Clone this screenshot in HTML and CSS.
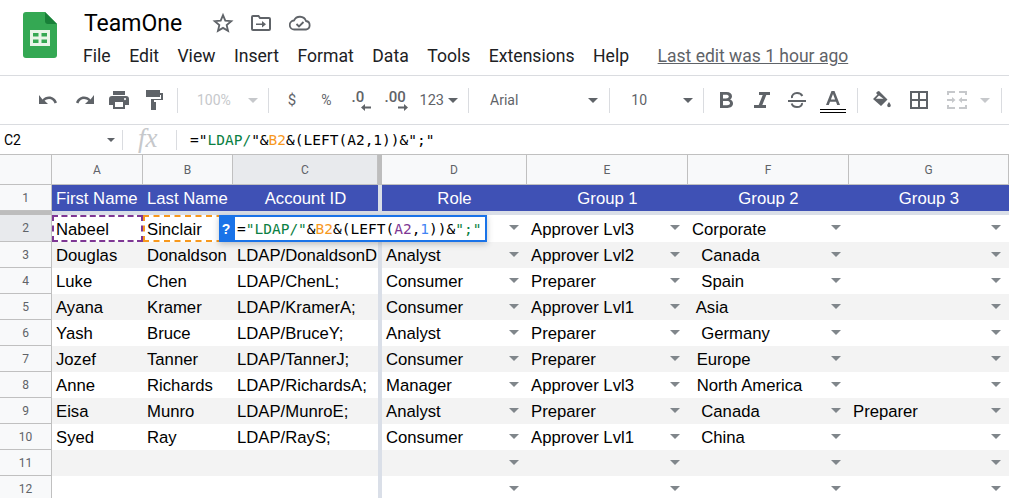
FILE: index.html
```html
<!DOCTYPE html>
<html lang="en">
<head>
  <meta charset="UTF-8">
  <meta name="viewport" content="width=device-width, initial-scale=1.0">
  <title>TeamOne</title>
  <link rel="stylesheet" href="styles.css">
</head>
<body>
  <header class="titlebar">
    <svg class="logo" width="34" height="46" viewBox="0 0 34 46">
      <path d="M3 0H22L34 12V43a3 3 0 0 1-3 3H3a3 3 0 0 1-3-3V3a3 3 0 0 1 3-3z" fill="#34a853"/>
      <path d="M22 0L34 12H25a3 3 0 0 1-3-3z" fill="#188038"/>
      <path d="M7 18H27V34H7zM10 21V24.500H15.500V21zM18.500 21V24.500H24V21zM10 27.500V31H15.500V27.500zM18.500 27.500V31H24V27.500z" fill="#e8f5e9" fill-rule="evenodd"/>
    </svg>
    <div class="titlebar-main">
      <div class="doc-row">
        <span class="doc-name">TeamOne</span>
        <svg class="doc-star" width="22" height="22" viewBox="0 0 24 24"><path d="M12 3.500l2.500 6 6.500.5-5 4.300 1.500 6.300L12 17.300 6.500 20.600 8 14.300 3 10l6.500-.5z" fill="none" stroke="#5f6368" stroke-width="2"/></svg>
        <svg class="doc-move" width="20" height="18" viewBox="0 0 20 18"><path d="M1 3V15a1 1 0 0 0 1 1H18a1 1 0 0 0 1-1V5a1 1 0 0 0-1-1H9L7.500 2H2A1 1 0 0 0 1 3z" fill="none" stroke="#5f6368" stroke-width="2"/><path d="M5 9.500h6V7l4 3.200-4 3.200v-2.500H5z" fill="#5f6368"/></svg>
        <svg class="doc-cloud" width="22" height="16" viewBox="0 0 22 16"><path d="M5.500 14.500a4.500 4.500 0 0 1-.5-9A6.500 6.500 0 0 1 17 6a4.300 4.300 0 0 1 0 8.500z" fill="none" stroke="#5f6368" stroke-width="1.800"/><path d="M7.500 9l2.500 2.500 4.500-4.500" fill="none" stroke="#5f6368" stroke-width="1.800"/></svg>
      </div>
      <nav class="menu-row">
        <span class="menu-item">File</span>
        <span class="menu-item">Edit</span>
        <span class="menu-item">View</span>
        <span class="menu-item">Insert</span>
        <span class="menu-item">Format</span>
        <span class="menu-item">Data</span>
        <span class="menu-item">Tools</span>
        <span class="menu-item">Extensions</span>
        <span class="menu-item">Help</span>
        <span class="last-edit">Last edit was 1 hour ago</span>
      </nav>
    </div>
  </header>

  <div class="toolbar">
    <svg class="tool tool-undo" width="20" height="12" viewBox="0 0 20 12"><path d="M3.500 5.500C5 3.500 7.500 2.500 10 2.500c3.700 0 6.800 2.400 8 6l-2.400 1C14.800 6.800 12.600 5 10 5c-1.700 0-3.200.7-4.400 1.800L9 10H0V1z" fill="#5f6368"/></svg>
    <svg class="tool tool-redo" width="20" height="12" viewBox="0 0 20 12"><path d="M16.500 5.500C15 3.500 12.500 2.500 10 2.500c-3.700 0-6.800 2.400-8 6l2.400 1C5.200 6.800 7.400 5 10 5c1.700 0 3.200.7 4.400 1.800L11 10h9V1z" fill="#5f6368"/></svg>
    <svg class="tool tool-print" width="20" height="18" viewBox="0 0 20 18"><path d="M4 0H16V4H4zM3 5H17a3 3 0 0 1 3 3V14H16V18H4V14H0V8a3 3 0 0 1 3-3zM6 11V16H14V11zM16 7a1 1 0 1 0 .01 0z" fill="#5f6368" fill-rule="evenodd"/></svg>
    <svg class="tool tool-paint" width="17" height="20" viewBox="0 0 17 20"><path d="M0 0H14V3H17V10H8V12H10V20H5V9H15V5H14V7H0z" fill="#5f6368"/></svg>
    <span class="tool-sep sep-a"></span>
    <span class="tool-zoom">100%</span>
    <span class="caret caret-off caret-zoom"></span>
    <span class="tool-sep sep-b"></span>
    <span class="tool-text tool-dollar">$</span>
    <span class="tool-text tool-percent">%</span>
    <span class="tool-dec tool-dec-less">.0<svg width="10" height="7" viewBox="0 0 10 7"><path d="M0 3.500L4 0V2.500H10V4.500H4V7z" fill="#5f6368"/></svg></span>
    <span class="tool-dec tool-dec-more">.00<svg width="10" height="7" viewBox="0 0 10 7"><path d="M10 3.500L6 0V2.500H0V4.500H6V7z" fill="#5f6368"/></svg></span>
    <span class="tool-text tool-numfmt">123</span>
    <span class="caret"></span>
    <span class="tool-sep sep-c"></span>
    <span class="tool-text tool-font">Arial</span>
    <span class="caret caret-font"></span>
    <span class="tool-sep sep-d"></span>
    <span class="tool-text tool-size">10</span>
    <span class="caret caret-size"></span>
    <span class="tool-sep sep-e"></span>
    <svg class="tool tool-bold" width="13" height="16" viewBox="0 0 13 16"><path d="M0 0H6.500C10 0 12 1.800 12 4.300c0 1.500-.8 2.700-2 3.300 1.800.6 3 2 3 4C13 14.300 10.800 16 7.500 16H0zM3 2.700V6.500H6c1.500 0 2.800-.6 2.800-1.900S7.500 2.700 6 2.700zM3 9V13.300H7c1.700 0 3-.7 3-2.200S8.700 9 7 9z" fill="#5f6368" fill-rule="evenodd"/></svg>
    <svg class="tool tool-italic" width="16" height="16" viewBox="0 0 16 16"><path d="M5 0H16V3H12.300L8.300 13H12V16H0V13H4.700L8.700 3H5z" fill="#5f6368"/></svg>
    <svg class="tool tool-strike" width="18" height="16" viewBox="0 0 18 16"><path d="M0 8H18V10H0z" fill="#5f6368"/><path d="M4 6C3.500 3 6 1 9 1c3 0 4.600 1.300 5.300 3M14 11c.4 2.500-2 4-5 4-2.500 0-4.700-1.200-5.300-3.500" fill="none" stroke="#5f6368" stroke-width="2"/></svg>
    <span class="tool-color">
      <svg width="14" height="14" viewBox="0 0 14 14"><path d="M5.500 0H8.500L14 14H11.200L10 10.800H4L2.800 14H0zM7 3L4.900 8.500H9.100z" fill="#5f6368" fill-rule="evenodd"/></svg>
    </span>
    <span class="tool-sep sep-f"></span>
    <svg class="tool tool-fill" width="18" height="18" viewBox="0 0 18 18"><path d="M6 0L14.500 8.500 8 15 0 8 4.500 3.500 3 2 4.500.5z" fill="#5f6368"/><path d="M6 4.500L2.800 7.700H10.500z" fill="#fff"/><path d="M16 11c1 1.500 1.800 2.500 1.800 3.500a1.800 1.800 0 0 1-3.600 0c0-1 .8-2 1.800-3.500z" fill="#5f6368"/></svg>
    <svg class="tool tool-borders" width="18" height="18" viewBox="0 0 18 18"><path d="M0 0H18V18H0zM2 2V8H8V2zM10 2V8H16V2zM2 10V16H8V10zM10 10V16H16V10z" fill="#5f6368" fill-rule="evenodd"/></svg>
    <svg class="tool tool-merge" width="20" height="18" viewBox="0 0 20 18"><path d="M0 0H8V2H2V4H0zM12 0H20V4H18V2H12zM0 14H2V16H8V18H0zM18 14H20V18H12V16H18zM0 8H5V6L8.500 9 5 12V10H0zM20 8H15V6L11.500 9 15 12V10H20z" fill="#c6c8cb"/></svg>
    <span class="caret caret-off caret-merge"></span>
    <span class="tool-sep sep-g"></span>
  </div>

  <div class="formula-bar">
    <span class="name-box">C2</span>
    <span class="caret caret-small"></span>
    <span class="bar-sep"></span>
    <span class="fx">fx</span>
    <span class="bar-sep"></span>
    <span class="formula">="<span class="f-green">LDAP/</span>"&amp;<span class="f-orange">B2</span>&amp;(LEFT(A2,1))&amp;";"</span>
  </div>

  <main class="sheet" id="sheet"></main>

  <div class="cell-editor">
    <span class="editor-help">?</span>
    <span class="editor-input">=<span class="f-green">"LDAP/"</span>&amp;<span class="f-orange">B2</span>&amp;(LEFT(<span class="f-purple">A2</span>,<span class="f-blue">1</span>))&amp;<span class="f-green">";"</span></span>
  </div>

  <script>
    // rows of the sheet: first, last, account, role, group 1, group 2, group 3
    const rows = [
      ['Nabeel', 'Sinclair', '', '', 'Approver Lvl3', 'Corporate', ''],
      ['Douglas', 'Donaldson', 'LDAP/DonaldsonD', 'Analyst', 'Approver Lvl2', '  Canada', ''],
      ['Luke', 'Chen', 'LDAP/ChenL;', 'Consumer', 'Preparer', '  Spain', ''],
      ['Ayana', 'Kramer', 'LDAP/KramerA;', 'Consumer', 'Approver Lvl1', ' Asia', ''],
      ['Yash', 'Bruce', 'LDAP/BruceY;', 'Analyst', 'Preparer', '  Germany', ''],
      ['Jozef', 'Tanner', 'LDAP/TannerJ;', 'Consumer', 'Preparer', ' Europe', ''],
      ['Anne', 'Richards', 'LDAP/RichardsA;', 'Manager', 'Approver Lvl3', ' North America', ''],
      ['Eisa', 'Munro', 'LDAP/MunroE;', 'Analyst', 'Preparer', '  Canada', 'Preparer'],
      ['Syed', 'Ray', 'LDAP/RayS;', 'Consumer', 'Approver Lvl1', '  China', ''],
      ['', '', '', '', '', '', ''],
      ['', '', '', '', '', '', '']
    ];
    const letters = ['A', 'B', 'C', 'D', 'E', 'F', 'G'];
    const titles = ['First Name', 'Last Name', 'Account ID', 'Role', 'Group 1', 'Group 2', 'Group 3'];
    const sheet = document.getElementById('sheet');

    function addCell(cls, text) {
      const el = document.createElement('div');
      el.className = cls;
      el.textContent = text;
      sheet.appendChild(el);
      return el;
    }

    function addFreeze(cls) {
      addCell('freeze ' + cls, '');
    }

    // column letters
    addCell('corner', '');
    letters.forEach((l, i) => {
      if (i === 3) addFreeze('freeze-head');
      addCell('col-head' + (l === 'C' ? ' col-active' : ''), l);
    });

    // frozen title row
    addCell('row-head', '1');
    titles.forEach((t, i) => {
      if (i === 3) addFreeze('freeze-body');
      addCell('title-cell', t).classList.add(i < 2 ? 'title-left' : 'title-center');
    });
    addCell('freeze-row-head', '');
    addCell('freeze-row', '');

    // data rows
    rows.forEach((row, r) => {
      const num = r + 2;
      addCell('row-head' + (num === 2 ? ' row-active' : ''), num);
      row.forEach((val, c) => {
        if (c === 3) addFreeze('freeze-body');
        const cls = 'cell' + (r % 2 === 1 ? ' cell-band' : '');
        const cell = addCell(cls, val);
        if (r === 0 && c === 0) cell.classList.add('cell-dash-purple');
        if (r === 0 && c === 1) cell.classList.add('cell-dash-orange');
        if (c >= 3) {
          cell.classList.add('cell-drop');
          const arrow = document.createElement('span');
          arrow.className = 'drop-arrow';
          cell.appendChild(arrow);
        }
      });
    });
  </script>
</body>
</html>
```

FILE: styles.css
```css
* {
  box-sizing: border-box;
}
html, body {
  height: 100%;
}
body {
  margin: 0;
  position: relative;
  height: 498px;
  overflow: hidden;
  background: #fff;
  font-family: "Liberation Sans", Arial, sans-serif;
  color: #000;
}

/* title area */
.titlebar {
  display: flex;
  height: 76px;
  border-bottom: 1px solid #dadce0;
  padding: 12px 0 0 23px;
}
.logo {
  flex: none;
  margin-right: 27px;
}
.titlebar-main {
  display: flex;
  flex-direction: column;
}
.doc-row {
  display: flex;
  align-items: center;
  height: 22px;
  margin-bottom: 12px;
}
.doc-name {
  font-family: Roboto, sans-serif;
  font-size: 23px;
  width: 128px;
}
.doc-move { margin-left: 17px; }
.doc-cloud { margin-left: 18px; }
.menu-row {
  display: flex;
  align-items: center;
  margin-left: -1px;
  font-family: Roboto, sans-serif;
  font-size: 17.600px;
  color: #202124;
}
.menu-item {
  margin-right: 18.500px;
}
.last-edit {
  margin-left: 10px;
  font-size: 17.500px;
  color: #5f6368;
  text-decoration: underline;
}

/* toolbar */
.toolbar {
  display: flex;
  align-items: center;
  height: 49px;
  border-bottom: 1px solid #dadce0;
  padding-left: 39px;
  font-family: Roboto, sans-serif;
  color: #5f6368;
}
.tool { flex: none; }
.tool-redo { margin-left: 15px; }
.tool-print { margin-left: 15px; }
.tool-paint { margin-left: 17px; }
.tool-sep {
  flex: none;
  width: 1px;
  height: 25px;
  background: #dadce0;
}
.sep-a { margin-left: 14px; }
.tool-zoom {
  margin-left: 19px;
  font-size: 14px;
  color: #c6c8cb;
}
.caret {
  flex: none;
  width: 0;
  height: 0;
  border-left: 5px solid transparent;
  border-right: 5px solid transparent;
  border-top: 5px solid #5f6368;
}
.caret-off { border-top-color: #c6c8cb; }
.caret-zoom { margin-left: 17px; }
.sep-b { margin-left: 10px; }
.tool-text { font-size: 14px; }
.tool-dollar { margin-left: 19px; font-size: 15px; }
.tool-percent { margin-left: 25px; font-size: 14px; }
.tool-dec {
  display: inline-flex;
  flex-direction: column;
  height: 24px;
  font-size: 15px;
  font-weight: 500;
  line-height: 18px;
}
.tool-dec svg {
  align-self: flex-end;
  margin-top: -2px;
}
.tool-dec-less { margin-left: 20px; width: 19px; }
.tool-dec-more { margin-left: 14px; width: 23px; }
.tool-numfmt { margin-left: 12px; font-size: 14.500px; }
.tool-numfmt + .caret { margin-left: 4px; }
.sep-c { margin-left: 10px; }
.tool-font { margin-left: 21px; }
.caret-font { margin-left: 70px; }
.sep-d { margin-left: 11px; }
.tool-size { margin-left: 21px; }
.caret-size { margin-left: 36px; }
.sep-e { margin-left: 10px; }
.tool-bold { margin-left: 16px; }
.tool-italic { margin-left: 21px; }
.tool-strike { margin-left: 18px; }
.tool-color {
  display: inline-flex;
  justify-content: center;
  margin-left: 14px;
  width: 26px;
  height: 26px;
  padding-top: 4px;
  border-bottom: 4px double #000;
}
.sep-f { margin-left: 11px; }
.tool-fill { margin-left: 15px; }
.tool-borders { margin-left: 19px; }
.tool-merge { margin-left: 19px; }
.caret-merge { margin-left: 13px; }
.sep-g { margin-left: 11px; }

/* formula bar */
.formula-bar {
  display: flex;
  align-items: center;
  height: 30px;
  border-bottom: 1px solid #c0c0c0;
  font-family: "DejaVu Sans Mono", monospace;
  color: #000;
}
.name-box {
  width: 107px;
  padding-left: 4px;
  font-family: Roboto, sans-serif;
  font-size: 14px;
}
.caret-small {
  border-left-width: 4px;
  border-right-width: 4px;
  border-top-width: 4px;
}
.bar-sep {
  flex: none;
  width: 1px;
  height: 20px;
  margin-left: 7px;
  background: #dadce0;
}
.fx {
  margin-left: 15px;
  padding-bottom: 3px;
  width: 31px;
  font-family: "Liberation Serif", serif;
  font-style: italic;
  font-size: 27px;
  line-height: 24px;
  color: #c6c8cb;
}
.formula {
  margin-left: 13px;
  font-size: 14.500px;
  white-space: pre;
}
.f-green { color: #0b8043; }
.f-orange { color: #f7981d; }
.f-purple { color: #7e3794; }
.f-blue { color: #4285f4; }

/* sheet grid */
.sheet {
  display: grid;
  grid-template-columns: 52px 91px 90px 145px 4px 145px 161px 161px 160px;
  grid-template-rows: 30px 26px 4px 27px repeat(10, 26px);
  font-size: 16.700px;
}
.corner,
.col-head,
.row-head {
  display: flex;
  align-items: center;
  justify-content: center;
  background: #f8f9fa;
  color: #5f6368;
  font-family: Roboto, sans-serif;
  font-size: 12px;
  border-right: 1px solid #c0c0c0;
  border-bottom: 1px solid #c0c0c0;
}
.col-active,
.row-active {
  background: #e8eaed;
}
.freeze-head {
  background: #bdbdbd;
}
.freeze-body {
  background: #dadfe8;
}
.freeze-row-head {
  background: #bdbdbd;
}
.freeze-row {
  grid-column: 2 / -1;
  background: #dadfe8;
}
.title-cell {
  display: flex;
  align-items: center;
  padding-top: 1px;
  background: #3f51b5;
  color: #fff;
  white-space: nowrap;
  overflow: hidden;
}
.title-left {
  justify-content: flex-start;
  padding-left: 4px;
}
.title-center {
  justify-content: center;
}
.cell {
  position: relative;
  display: flex;
  align-items: center;
  padding: 2px 0 0 4px;
  white-space: pre;
  overflow: hidden;
  background: #fff;
  color: #000;
}
.cell-band {
  background: #f3f3f3;
}
.cell-drop {
  padding-right: 20px;
}
.drop-arrow {
  position: absolute;
  right: 8px;
  top: 10px;
  width: 0;
  height: 0;
  border-left: 5px solid transparent;
  border-right: 5px solid transparent;
  border-top: 5px solid #80868b;
}
.cell-dash-purple {
  padding-left: 2px;
  border: 2px dashed #7e3794;
}
.cell-dash-orange {
  padding-left: 2px;
  border: 2px dashed #f7981d;
}

/* formula editor floats over the cells */
.cell-editor {
  position: absolute;
  left: 219px;
  top: 215px;
  display: flex;
  height: 27px;
  box-shadow: 0 2px 6px rgba(60, 64, 67, 0.3);
}
.editor-help {
  display: flex;
  align-items: center;
  justify-content: center;
  width: 14px;
  background: #1a73e8;
  color: #fff;
  font-weight: bold;
  font-size: 14px;
  font-family: "Liberation Sans", sans-serif;
}
.editor-input {
  display: flex;
  align-items: center;
  width: 254px;
  padding-left: 2px;
  background: #fff;
  border: 2px solid #1a73e8;
  font-family: "DejaVu Sans Mono", monospace;
  font-size: 14.500px;
  white-space: pre;
}
```
